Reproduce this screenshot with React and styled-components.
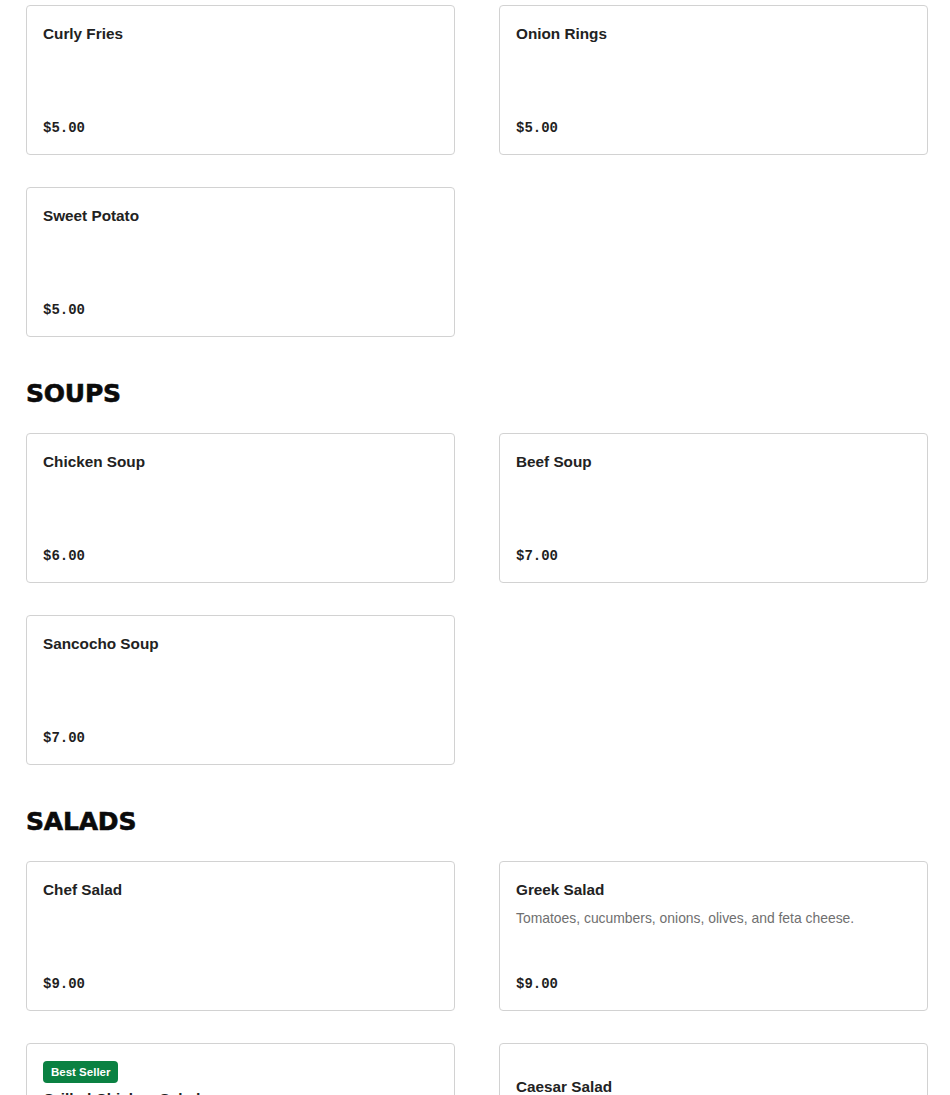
import React from "react";
import styled, { createGlobalStyle } from "styled-components";

const GlobalStyle = createGlobalStyle`
  html, body {
    margin: 0;
    padding: 0;
    background: #ffffff;
    overflow: hidden;
  }
  body {
    font-family: "Liberation Sans", Arial, sans-serif;
    color: #1f1f1f;
  }
`;

const Page = styled.main`
  width: 902px;
  margin-left: 26px;
  padding-top: 5px;
  display: flex;
  flex-direction: column;
`;

const Section = styled.section`
  display: flex;
  flex-direction: column;
`;

const SectionTitle = styled.h2`
  margin: 41px 0 23px;
  font-family: "DejaVu Sans", "Liberation Sans", sans-serif;
  font-weight: 700;
  font-size: 25px;
  line-height: 32px;
  letter-spacing: -0.2px;
  color: #0b0b0b;
  -webkit-text-stroke: 0.6px #0b0b0b;
  text-transform: uppercase;
`;

const Grid = styled.div`
  display: grid;
  grid-template-columns: 1fr 1fr;
  column-gap: 44px;
  row-gap: 32px;
  align-items: stretch;
`;

const Card = styled.article`
  box-sizing: border-box;
  min-height: 150px;
  border: 1px solid #d2d2d2;
  border-radius: 4px;
  padding: 16px;
  background: #fff;
  display: flex;
  flex-direction: column;
  justify-content: center;
`;

const Content = styled.div`
  display: flex;
  flex-direction: column;
  min-height: 116px;
`;

const Badge = styled.span`
  align-self: flex-start;
  margin: 1px 0 4px;
  height: 22px;
  padding: 0 8px;
  box-sizing: border-box;
  display: inline-flex;
  align-items: center;
  border-radius: 4px;
  background: #0a8142;
  color: #ffffff;
  font-family: "Liberation Sans", Arial, sans-serif;
  font-weight: 700;
  font-size: 11.5px;
`;

const Name = styled.h3`
  margin: 0;
  font-size: 15.3px;
  line-height: 24px;
  font-weight: 700;
  color: #222222;
`;

const Description = styled.p`
  margin: 6px 0 0;
  font-size: 13.9px;
  line-height: 20px;
  color: #6f6f6f;
`;

const Price = styled.div`
  margin-top: auto;
  padding-top: 9px;
  font-family: "Liberation Mono", "Courier New", monospace;
  font-weight: 700;
  font-size: 14px;
  line-height: 20px;
  color: #1f1f1f;
`;

const menu = [
  {
    title: null,
    items: [
      { name: "Curly Fries", price: "$5.00" },
      { name: "Onion Rings", price: "$5.00" },
      { name: "Sweet Potato", price: "$5.00" },
    ],
  },
  {
    title: "Soups",
    items: [
      { name: "Chicken Soup", price: "$6.00" },
      { name: "Beef Soup", price: "$7.00" },
      { name: "Sancocho Soup", price: "$7.00" },
    ],
  },
  {
    title: "Salads",
    items: [
      { name: "Chef Salad", price: "$9.00" },
      {
        name: "Greek Salad",
        desc: "Tomatoes, cucumbers, onions, olives, and feta cheese.",
        price: "$9.00",
      },
      {
        name: "Grilled Chicken Salad",
        badge: "Best Seller",
        desc: "Grilled chicken breast over fresh romaine lettuce with tomatoes, cucumbers, red onions and croutons, with your choice of dressing.",
        price: "$11.00",
      },
      { name: "Caesar Salad", price: "$9.00" },
    ],
  },
];

function MenuCard({ item }) {
  return (
    <Card>
      <Content>
        {item.badge && <Badge>{item.badge}</Badge>}
        <Name>{item.name}</Name>
        {item.desc && <Description>{item.desc}</Description>}
        <Price>{item.price}</Price>
      </Content>
    </Card>
  );
}

export default function App() {
  return (
    <>
      <GlobalStyle />
      <Page>
        {menu.map((section, i) => (
          <Section key={i}>
            {section.title && <SectionTitle>{section.title}</SectionTitle>}
            <Grid>
              {section.items.map((item) => (
                <MenuCard key={item.name} item={item} />
              ))}
            </Grid>
          </Section>
        ))}
      </Page>
    </>
  );
}
